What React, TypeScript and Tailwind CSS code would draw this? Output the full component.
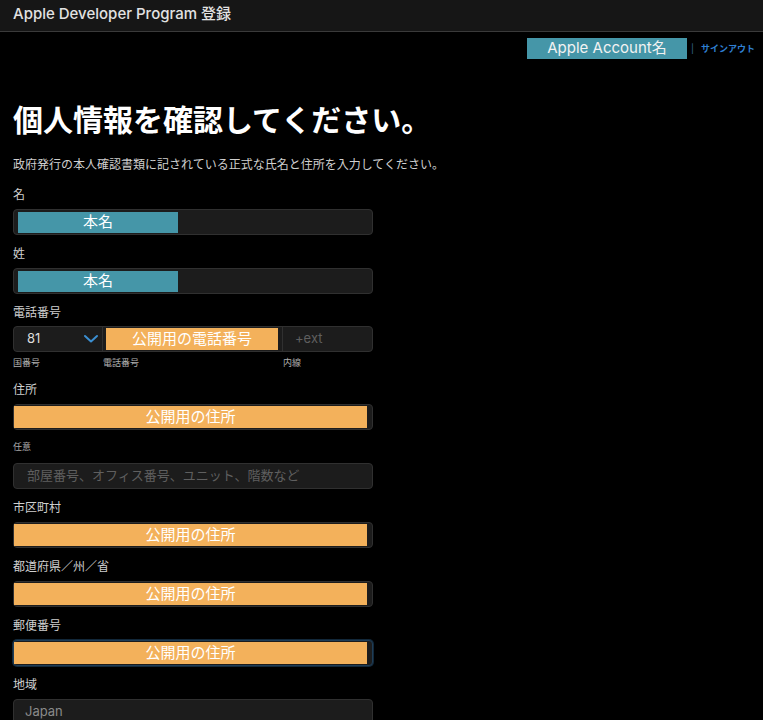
import type { ReactNode } from 'react';

const font = { fontFamily: 'Inter, "Noto Sans CJK JP", sans-serif' };

const Redact = ({ tone, full, children }: { tone: 'teal' | 'orange'; full?: boolean; children: ReactNode }) => (
  <div
    className={
      'absolute flex items-center justify-center text-[15px] text-white ' +
      (tone === 'teal' ? 'bg-[#4596a8] ' : 'bg-[#f3b15b] ') +
      (full ? 'left-0 right-[5px] top-[1px] bottom-[1px]' : 'left-[4px] top-[2px] bottom-[1px] w-[160px]')
    }
  >
    {children}
  </div>
);

const Box = ({ children, focus }: { children?: ReactNode; focus?: boolean }) => (
  <div
    className={
      'relative h-[26px] w-[360px] rounded-[4px] border bg-[#1c1c1c] ' +
      (focus ? 'border-[#1f3d57] shadow-[0_0_0_1px_#12283a]' : 'border-[#303030]')
    }
  >
    {children}
  </div>
);

const Label = ({ children }: { children: ReactNode }) => (
  <div className="text-[12px] leading-[16px] text-[#cfcfcf]">{children}</div>
);

const Field = ({ label, children, focus }: { label: string; children?: ReactNode; focus?: boolean }) => (
  <div className="mb-[11px] flex flex-col gap-[6px]">
    <Label>{label}</Label>
    <Box focus={focus}>{children}</Box>
  </div>
);

export default function App() {
  return (
    <div className="min-h-[720px] bg-black" style={font}>
      <header className="flex h-[32px] items-center border-b border-[#3a3a3a] bg-[#161616] px-[13px] pb-[2px]">
        <span className="text-[15px] font-medium text-[#e2e2e2]">Apple Developer Program 登録</span>
      </header>

      <div className="mt-[6px] flex items-center justify-end pr-[8px]">
        <div className="flex h-[21px] w-[160px] items-center justify-center bg-[#4596a8] text-[15px] text-[#f2f2f2]">
          Apple Account名
        </div>
        <span className="ml-[4px] text-[9px] text-[#3a6d99]">|</span>
        <span className="ml-[7px] text-[9px] font-semibold text-[#2f7fd0]">サインアウト</span>
      </div>

      <main className="px-[13px]">
        <h1 className="mt-[42px] text-[30px] font-bold leading-[38px] text-white">個人情報を確認してください。</h1>
        <p className="mt-[18px] text-[12px] leading-[16px] text-[#cfcfcf]">
          政府発行の本人確認書類に記されている正式な氏名と住所を入力してください。
        </p>

        <div className="mt-[14px]">
          <Field label="名">
            <Redact tone="teal">本名</Redact>
          </Field>
          <Field label="姓">
            <Redact tone="teal">本名</Redact>
          </Field>

          <div className="flex flex-col gap-[5px]">
            <Label>電話番号</Label>
            <div className="flex h-[26px] w-[360px] rounded-[4px] border border-[#303030] bg-[#1c1c1c]">
              <div className="flex w-[89px] items-center justify-between border-r border-[#303030] pl-[13px] pr-[3px]">
                <span className="text-[13px] text-[#dddddd]">81</span>
                <svg width="16" height="10" viewBox="0 0 16 10" fill="none">
                  <path d="M2 2l6 5.5L14 2" stroke="#3b8fd2" strokeWidth="2" strokeLinecap="round" strokeLinejoin="round" />
                </svg>
              </div>
              <div className="relative w-[180px] border-r border-[#303030]">
                <div className="absolute left-[3px] right-[4px] top-[1px] bottom-[1px] flex items-center justify-center bg-[#f3b15b] text-[15px] text-white">
                  公開用の電話番号
                </div>
              </div>
              <div className="flex flex-1 items-center pl-[12px] text-[13px] text-[#5f5f5f]">+ext</div>
            </div>
            <div className="flex h-[12px] items-center text-[9px] text-[#b0b0b0]">
              <span className="w-[90px]">国番号</span>
              <span className="w-[180px]">電話番号</span>
              <span>内線</span>
            </div>
          </div>

          <div className="mt-[13px]">
            <Field label="住所">
              <Redact tone="orange" full>公開用の住所</Redact>
            </Field>
          </div>

          <div className="mt-[4px] mb-[11px] flex flex-col gap-[10px]">
            <div className="text-[9px] leading-[12px] text-[#a8a8a8]">任意</div>
            <Box>
              <div className="flex h-full items-center pl-[13px] text-[13px] text-[#5f5f5f]">
                部屋番号、オフィス番号、ユニット、階数など
              </div>
            </Box>
          </div>

          <Field label="市区町村">
            <Redact tone="orange" full>公開用の住所</Redact>
          </Field>
          <Field label="都道府県／州／省">
            <Redact tone="orange" full>公開用の住所</Redact>
          </Field>
          <Field label="郵便番号" focus>
            <Redact tone="orange" full>公開用の住所</Redact>
          </Field>
          <Field label="地域">
            <div className="flex h-full items-center pl-[11px] text-[13px] text-[#8a8a8a]">Japan</div>
          </Field>
        </div>
      </main>
    </div>
  );
}
